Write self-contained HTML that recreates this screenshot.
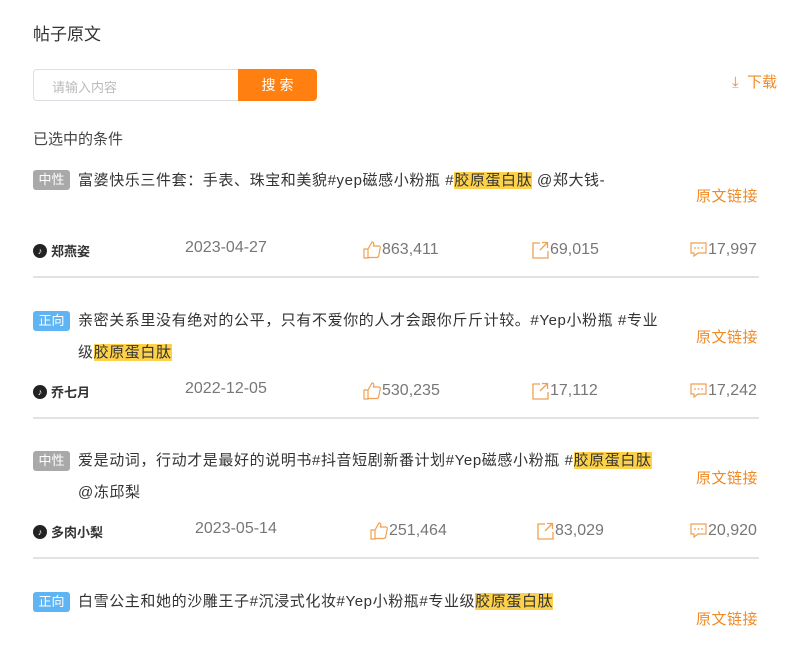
<!DOCTYPE html>
<html><head><meta charset="utf-8"><style>
*{margin:0;padding:0;box-sizing:border-box}
body{width:791px;height:656px;overflow:hidden;background:#fff;font-family:"Liberation Sans","Noto Sans CJK SC",sans-serif;color:#333;position:relative}
.a{position:absolute;white-space:nowrap}
.title{left:33px;top:20px;font-size:17px;color:#333}
.inp{left:33px;top:69px;width:206px;height:32px;border:1px solid #dcdfe6;border-right:none;border-radius:4px 0 0 4px;font-size:13px;color:#bbb;padding:7px 0 0 18px}
.btn{left:238px;top:69px;width:79px;height:32px;background:#ff8010;border-radius:0 4px 4px 0;color:#fff;font-size:14px;text-align:center;line-height:32px;letter-spacing:4px;text-indent:4px}
.dl{left:732px;top:71px;font-size:15px;color:#f08a24}
.cond{left:33px;top:128px;font-size:15px;color:#444}
.tag{position:absolute;left:33px;width:37px;height:20px;border-radius:3px;color:#fff;font-size:13px;text-align:center;line-height:20px}
.g{background:#a9a9a9}.b{background:#5fb4f4}
.txt{position:absolute;left:78px;font-size:15px;color:#333;line-height:32px;width:592px;white-space:normal;letter-spacing:0.6px}
.hl{background:#fdd24a}
.link{position:absolute;left:696px;font-size:15px;color:#f08a24;letter-spacing:0.5px}
.au{position:absolute;left:33px;font-size:13px;font-weight:bold;color:#333;display:flex;align-items:center;gap:4px}
.tt{width:14px;height:14px;border-radius:50%;background:#222;color:#fff;font-size:9px;text-align:center;line-height:14px}
.m{position:absolute;font-size:16px;color:#777;display:flex;align-items:center;gap:1px}
.sep{position:absolute;left:33px;width:726px;height:2px;background:#e2e2e2}
svg{display:block}
</style></head><body>
<div class="a title">帖子原文</div>
<div class="a inp">请输入内容</div>
<div class="a btn">搜索</div>
<div class="a dl">⤓&nbsp;&nbsp;下载</div>
<div class="a cond">已选中的条件</div>

<div class="tag g" style="top:170px">中性</div>
<div class="txt" style="top:165px">富婆快乐三件套：手表、珠宝和美貌#yep磁感小粉瓶 #<span class="hl">胶原蛋白肽</span> @郑大钱-</div>
<div class="link" style="top:185px">原文链接</div>
<div class="au" style="top:241px"><span class="tt">♪</span>郑燕姿</div>
<div class="m" style="left:185px;top:239px">2023-04-27</div>
<div class="m" style="left:363px;top:241px"><svg width="18" height="18" viewBox="0 0 18 18"><path d="M1 8h4v9H1zM5 8l4-7c2 0 2 2 1.5 4H16c1 0 1.5 1 1.2 2l-1.6 8c-.2 1-1 1.5-2 1.5H5" fill="none" stroke="#f0a050" stroke-width="1.2"/></svg>863,411</div>
<div class="m" style="left:531px;top:241px"><svg width="18" height="18" viewBox="0 0 18 18"><path d="M9 2H2v15h15v-7M11 1.5h5.5V7M16.5 1.5L9 9" fill="none" stroke="#f0a050" stroke-width="1.3"/></svg>69,015</div>
<div class="m" style="left:690px;top:241px"><svg width="17" height="16" viewBox="0 0 17 16"><path d="M1 1h15v10H8l-4 3v-3H1z" fill="none" stroke="#f0a050" stroke-width="1.2"/><circle cx="5" cy="6" r=".9" fill="#f0a050"/><circle cx="8.5" cy="6" r=".9" fill="#f0a050"/><circle cx="12" cy="6" r=".9" fill="#f0a050"/></svg>17,997</div>
<div class="sep" style="top:276px"></div>

<div class="tag b" style="top:311px">正向</div>
<div class="txt" style="top:305px">亲密关系里没有绝对的公平，只有不爱你的人才会跟你斤斤计较。#Yep小粉瓶 #专业<br>级<span class="hl">胶原蛋白肽</span></div>
<div class="link" style="top:326px">原文链接</div>
<div class="au" style="top:382px"><span class="tt">♪</span>乔七月</div>
<div class="m" style="left:185px;top:380px">2022-12-05</div>
<div class="m" style="left:363px;top:382px"><svg width="18" height="18" viewBox="0 0 18 18"><path d="M1 8h4v9H1zM5 8l4-7c2 0 2 2 1.5 4H16c1 0 1.5 1 1.2 2l-1.6 8c-.2 1-1 1.5-2 1.5H5" fill="none" stroke="#f0a050" stroke-width="1.2"/></svg>530,235</div>
<div class="m" style="left:531px;top:382px"><svg width="18" height="18" viewBox="0 0 18 18"><path d="M9 2H2v15h15v-7M11 1.5h5.5V7M16.5 1.5L9 9" fill="none" stroke="#f0a050" stroke-width="1.3"/></svg>17,112</div>
<div class="m" style="left:690px;top:382px"><svg width="17" height="16" viewBox="0 0 17 16"><path d="M1 1h15v10H8l-4 3v-3H1z" fill="none" stroke="#f0a050" stroke-width="1.2"/><circle cx="5" cy="6" r=".9" fill="#f0a050"/><circle cx="8.5" cy="6" r=".9" fill="#f0a050"/><circle cx="12" cy="6" r=".9" fill="#f0a050"/></svg>17,242</div>
<div class="sep" style="top:417px"></div>

<div class="tag g" style="top:451px">中性</div>
<div class="txt" style="top:445px">爱是动词，行动才是最好的说明书#抖音短剧新番计划#Yep磁感小粉瓶 #<span class="hl">胶原蛋白肽</span><br>@冻邱梨</div>
<div class="link" style="top:467px">原文链接</div>
<div class="au" style="top:522px"><span class="tt">♪</span>多肉小梨</div>
<div class="m" style="left:195px;top:520px">2023-05-14</div>
<div class="m" style="left:370px;top:522px"><svg width="18" height="18" viewBox="0 0 18 18"><path d="M1 8h4v9H1zM5 8l4-7c2 0 2 2 1.5 4H16c1 0 1.5 1 1.2 2l-1.6 8c-.2 1-1 1.5-2 1.5H5" fill="none" stroke="#f0a050" stroke-width="1.2"/></svg>251,464</div>
<div class="m" style="left:536px;top:522px"><svg width="18" height="18" viewBox="0 0 18 18"><path d="M9 2H2v15h15v-7M11 1.5h5.5V7M16.5 1.5L9 9" fill="none" stroke="#f0a050" stroke-width="1.3"/></svg>83,029</div>
<div class="m" style="left:690px;top:522px"><svg width="17" height="16" viewBox="0 0 17 16"><path d="M1 1h15v10H8l-4 3v-3H1z" fill="none" stroke="#f0a050" stroke-width="1.2"/><circle cx="5" cy="6" r=".9" fill="#f0a050"/><circle cx="8.5" cy="6" r=".9" fill="#f0a050"/><circle cx="12" cy="6" r=".9" fill="#f0a050"/></svg>20,920</div>
<div class="sep" style="top:557px"></div>

<div class="tag b" style="top:592px">正向</div>
<div class="txt" style="top:586px">白雪公主和她的沙雕王子#沉浸式化妆#Yep小粉瓶#专业级<span class="hl">胶原蛋白肽</span></div>
<div class="link" style="top:608px">原文链接</div>
</body></html>
